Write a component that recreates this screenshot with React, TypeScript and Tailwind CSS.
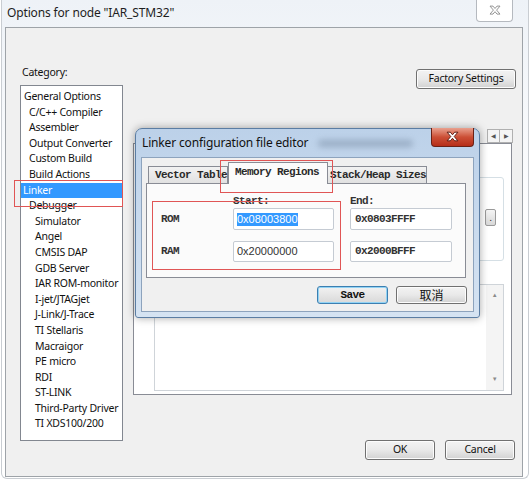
import React from 'react';

interface Category {
    name: string;
    level: number;
    selected?: boolean;
}

const categories: Category[] = [
    { name: 'General Options', level: 0 },
    { name: 'C/C++ Compiler', level: 1 },
    { name: 'Assembler', level: 1 },
    { name: 'Output Converter', level: 1 },
    { name: 'Custom Build', level: 1 },
    { name: 'Build Actions', level: 1 },
    { name: 'Linker', level: 1, selected: true },
    { name: 'Debugger', level: 1 },
    { name: 'Simulator', level: 2 },
    { name: 'Angel', level: 2 },
    { name: 'CMSIS DAP', level: 2 },
    { name: 'GDB Server', level: 2 },
    { name: 'IAR ROM-monitor', level: 2 },
    { name: 'I-jet/JTAGjet', level: 2 },
    { name: 'J-Link/J-Trace', level: 2 },
    { name: 'TI Stellaris', level: 2 },
    { name: 'Macraigor', level: 2 },
    { name: 'PE micro', level: 2 },
    { name: 'RDI', level: 2 },
    { name: 'ST-LINK', level: 2 },
    { name: 'Third-Party Driver', level: 2 },
    { name: 'TI XDS100/200', level: 2 },
];

// outlined X used on the window close buttons
const XGlyph: React.FC<{ fill: string; stroke: string; size?: number }> = ({ fill, stroke, size = 12 }) => (
    <svg width={size} height={size * 0.85} viewBox="0 0 12 10">
        <path
            d="M1 1 H4 L6 3.4 L8 1 H11 L7.6 5 L11 9 H8 L6 6.6 L4 9 H1 L4.4 5 Z"
            fill={fill}
            stroke={stroke}
            strokeWidth="0.9"
            strokeLinejoin="round"
        />
    </svg>
);

const winButton =
    'flex items-center justify-center rounded-[3px] border border-[#707070] bg-gradient-to-b from-[#f3f3f3] via-[#e9e9e9] to-[#d2d2d2] shadow-[inset_0_0_0_1px_#fcfcfc]';

const App: React.FC = () => {
    return (
        <div className="relative h-[480px] w-[530px] overflow-hidden bg-white font-['Noto_Sans',sans-serif] text-[10.5px] tracking-[-0.25px] text-[#111]">
            {/* main window frame */}
            <div className="mx-[1px] flex h-[479px] flex-col rounded-b-[6px] border-x border-b border-[#c9cdd2] bg-gradient-to-b from-[#eef2f7] via-white to-white">
                <div className="flex h-[27px] items-start justify-between">
                    <span className="ml-[5px] mt-[5px] text-[12px] leading-[16px] tracking-[-0.15px] text-[#1e1e1e]">
                        Options for node "IAR_STM32"
                    </span>
                    <button className="mr-[15px] flex h-[22px] w-[37px] items-center justify-center rounded-b-[4px] border border-t-0 border-[#b5b9bf] bg-white">
                        <XGlyph fill="#ffffff" stroke="#8a8a8a" />
                    </button>
                </div>

                <div className="ml-[3px] mr-[5px] flex h-[450px] border border-[#9ea3a8] bg-[#f0f0f0]">
                    {/* category column */}
                    <div className="ml-[14px] flex w-[103px] flex-col">
                        <span className="ml-[2px] mt-[36px] leading-[16px]">Category:</span>
                        <div className="mt-[5px] h-[356px] border border-[#828790] bg-white pt-[3px]">
                            {categories.map((c) => (
                                <div
                                    key={c.name}
                                    className={
                                        'h-[15.6px] whitespace-nowrap leading-[15.6px] ' +
                                        (c.selected
                                            ? 'bg-[#3399ff] pl-[2px] text-white'
                                            : c.level === 0
                                            ? 'pl-[3px]'
                                            : c.level === 1
                                            ? 'pl-[8px]'
                                            : 'pl-[14px]')
                                    }
                                >
                                    {c.name}
                                </div>
                            ))}
                        </div>
                    </div>

                    {/* settings column */}
                    <div className="ml-[10px] flex flex-1 flex-col pr-[6px]">
                        <button className={winButton + ' mt-[41px] h-[20px] w-[100px] self-end'}>Factory Settings</button>

                        <div className="mr-[4px] mt-[40px] flex flex-col">
                            <div className="-mr-px flex h-[14px] justify-end">
                                <span className="flex h-[14px] w-[13px] items-center justify-center border border-[#b0b0b0] bg-[#f4f4f4] text-[6px] text-[#555]">◀</span>
                                <span className="flex h-[14px] w-[13px] items-center justify-center border border-l-0 border-[#b0b0b0] bg-[#f4f4f4] text-[6px] text-[#555]">▶</span>
                            </div>
                            <div className="flex h-[252px] flex-col border border-[#898c95] bg-white">
                                <div className="ml-[16px] mr-[7px] mt-[33px] flex h-[84px] items-start justify-end rounded-[3px] border border-[#d5dfe5]">
                                    <span className="mr-[7px] mt-[31px] flex h-[17px] w-[11px] items-center justify-center rounded-[2px] border border-[#9a9a9a] bg-gradient-to-b from-[#f5f5f5] to-[#d8d8d8] text-[9px] leading-none">
                                        .
                                    </span>
                                </div>
                                <div className="ml-[20px] mr-[7px] mt-[23px] flex h-[107px] justify-end border border-[#cfd4d9] bg-white">
                                    <div className="flex w-[17px] flex-col items-center justify-between bg-[#f4f4f4] py-[6px] text-[6px] text-[#8a8a8a]">
                                        <span>▲</span>
                                        <span>▼</span>
                                    </div>
                                </div>
                            </div>
                        </div>

                        <div className="flex-1" />
                        <div className="mb-[16px] mr-px flex justify-end gap-[10px]">
                            <button className={winButton + ' h-[20px] w-[70px]'}>OK</button>
                            <button className={winButton + ' h-[20px] w-[70px]'}>Cancel</button>
                        </div>
                    </div>
                </div>
            </div>

            {/* Linker configuration file editor (floating dialog) */}
            <div className="absolute left-[135px] top-[128px] flex h-[190px] w-[345px] flex-col rounded-b-[3px] rounded-t-[7px] border border-[#5b7da3] bg-gradient-to-b from-[#bcd1e9] to-[#d5e3f2] shadow-[0_0_9px_rgba(0,0,0,0.35)]">
                <div className="flex h-[28px] items-start">
                    <span className="ml-[6px] mt-[6px] text-[12px] leading-[16px] tracking-[-0.15px]">Linker configuration file editor</span>
                    <span className="ml-[10px] mt-[11px] h-[7px] w-[95px] rounded-full bg-[#7f93ab] opacity-60 blur-[3px]" />
                    <button className="ml-auto mr-[5px] -mt-px flex h-[19px] w-[43px] items-center justify-center rounded-b-[4px] border border-t-0 border-[#6b2115] bg-gradient-to-b from-[#e8a08e] via-[#cc4f36] to-[#b62d18]">
                        <XGlyph fill="#ffffff" stroke="#5c1a10" size={13} />
                    </button>
                </div>

                <div className="mx-[5px] flex h-[155px] flex-col border border-[#8da3bd] bg-[#f0f0f0]">
                    <div className="flex h-[25px] items-end pl-[6px] font-['Liberation_Mono',monospace] text-[11px] font-bold tracking-[-0.6px] text-[#2a2a2a]">
                        <div className="h-[17px] w-[80px] whitespace-nowrap border border-b-0 border-[#898c95] bg-gradient-to-b from-[#f2f2f2] to-[#e1e1e1] pl-[6px] leading-[16px]">
                            Vector Table
                        </div>
                        <div className="relative z-10 -mb-px h-[22px] w-[100px] whitespace-nowrap border border-b-0 border-[#898c95] bg-[#fbfbfb] pl-[6px] leading-[19px]">
                            Memory Regions
                        </div>
                        <div className="h-[17px] w-[99px] whitespace-nowrap border border-b-0 border-l-0 border-[#898c95] bg-gradient-to-b from-[#f2f2f2] to-[#e1e1e1] pl-[2px] leading-[16px]">
                            Stack/Heap Sizes
                        </div>
                    </div>

                    <div className="ml-[4px] flex h-[95px] w-[320px] flex-col border border-[#898c95] bg-[#fbfbfb] font-['Liberation_Mono',monospace] text-[11px] font-bold tracking-[-0.6px] text-[#333]">
                        <div className="mt-[10px] flex h-[14px] leading-[14px]">
                            <span className="w-[86px]" />
                            <span className="w-[117px]">Start:</span>
                            <span>End:</span>
                        </div>
                        <div className="flex h-[22px] items-center">
                            <span className="w-[86px] pl-[14px]">ROM</span>
                            <div className="flex h-[22px] w-[101px] items-center rounded-[2px] border border-[#c5cbd3] bg-white pl-[3px] font-['Liberation_Sans',sans-serif] font-normal tracking-normal">
                                <span className="bg-[#3399ff] leading-[13px] text-white">0x08003800</span>
                            </div>
                            <div className="ml-[16px] flex h-[22px] w-[102px] items-center rounded-[2px] border border-[#c5cbd3] bg-white pl-[4px]">
                                0x0803FFFF
                            </div>
                        </div>
                        <div className="mt-[11px] flex h-[21px] items-center">
                            <span className="w-[86px] pl-[14px]">RAM</span>
                            <div className="flex h-[21px] w-[101px] items-center rounded-[2px] border border-[#c5cbd3] bg-white pl-[3px] font-['Liberation_Sans',sans-serif] font-normal tracking-normal">
                                0x20000000
                            </div>
                            <div className="ml-[16px] flex h-[21px] w-[102px] items-center rounded-[2px] border border-[#c5cbd3] bg-white pl-[4px]">
                                0x2000BFFF
                            </div>
                        </div>
                    </div>

                    <div className="mt-[8px] flex justify-end gap-[8px] pr-[6px]">
                        <button className="flex h-[18px] w-[71px] items-center justify-center rounded-[3px] border border-[#3c7fb1] bg-gradient-to-b from-[#f2f2f2] to-[#d9d9d9] font-['Liberation_Mono',monospace] text-[11px] font-bold tracking-[-0.6px] shadow-[inset_0_0_0_1px_#92d3f4]">
                            Save
                        </button>
                        <button className={winButton + " h-[18px] w-[71px] font-['Noto_Sans_CJK_SC',sans-serif] text-[12px] tracking-normal"}>取消</button>
                    </div>
                </div>
            </div>

            {/* red annotation boxes */}
            <div className="absolute left-[14px] top-[180px] h-[27px] w-[109px] border border-[#e05555]" />
            <div className="absolute left-[220px] top-[160px] z-20 h-[33px] w-[113px] border border-[#e05555]" />
            <div className="absolute left-[152px] top-[201px] z-20 h-[69px] w-[189px] border border-[#e05555]" />
        </div>
    );
};

export default App;
